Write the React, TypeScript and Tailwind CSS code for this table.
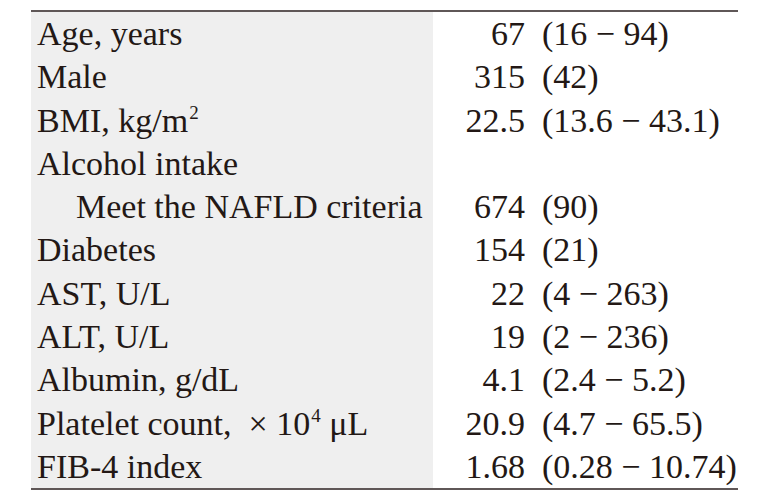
import React from "react";

type Row = { label: React.ReactNode; num?: string; paren?: string; indent?: boolean };

const Sup = ({ children }: { children: React.ReactNode }) => (
  <span className="relative top-[-13px] ml-[1px] text-[19px] leading-none align-baseline">{children}</span>
);

const rows: Row[] = [
  { label: "Age, years", num: "67", paren: "(16 − 94)" },
  { label: "Male", num: "315", paren: "(42)" },
  {
    label: (
      <>
        BMI, kg/m<Sup>2</Sup>
      </>
    ),
    num: "22.5",
    paren: "(13.6 − 43.1)",
  },
  { label: "Alcohol intake" },
  { label: "Meet the NAFLD criteria", num: "674", paren: "(90)", indent: true },
  { label: "Diabetes", num: "154", paren: "(21)" },
  { label: "AST, U/L", num: "22", paren: "(4 − 263)" },
  { label: "ALT, U/L", num: "19", paren: "(2 − 236)" },
  { label: "Albumin, g/dL", num: "4.1", paren: "(2.4 − 5.2)" },
  {
    label: (
      <>
        Platelet count,&nbsp;&nbsp;×&nbsp;10<Sup>4</Sup> μL
      </>
    ),
    num: "20.9",
    paren: "(4.7 − 65.5)",
  },
  { label: "FIB-4 index", num: "1.68", paren: "(0.28 − 10.74)" },
];

export default function App() {
  return (
    <div
      className="w-[769px] h-[500px] bg-white pt-[10px] pl-[31px] text-[#231815]"
      style={{ fontFamily: '"Liberation Serif", "Times New Roman", serif' }}
    >
      <div className="w-[707px] border-t-2 border-b-2 border-[#5f5757]">
        {rows.map((r, i) => (
          <div key={i} className="flex h-[43.3px] text-[34px] leading-[43.3px]">
            <div
              className={`w-[402px] bg-[#efefef] whitespace-nowrap ${
                r.indent ? "pl-[45px]" : "pl-[6px]"
              }`}
            >
              {r.label}
            </div>
            <div className="flex flex-1 whitespace-nowrap">
              <span className="w-[92px] text-right">{r.num ?? ""}</span>
              <span className="ml-[17px]">{r.paren ?? ""}</span>
            </div>
          </div>
        ))}
      </div>
    </div>
  );
}
